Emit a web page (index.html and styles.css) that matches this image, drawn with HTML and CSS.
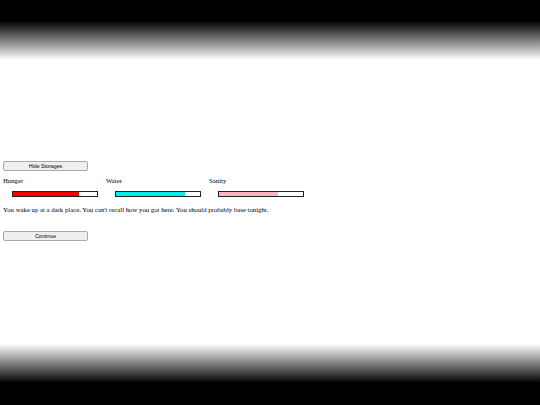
FILE: index.html
```html
<!DOCTYPE html>
<html>
<head>
<meta charset="utf-8">
<link rel="stylesheet" href="styles.css">
</head>
<body>
<main class="game">
  <button class="btn">Hide Storages</button>
  <div class="stats">
    <div class="stat">
      <div class="label">Hunger</div>
      <div class="bar"><div class="fill hunger" style="width:79%"></div></div>
    </div>
    <div class="stat">
      <div class="label">Water</div>
      <div class="bar"><div class="fill water" style="width:82%"></div></div>
    </div>
    <div class="stat">
      <div class="label">Sanity</div>
      <div class="bar"><div class="fill sanity" style="width:70%"></div></div>
    </div>
  </div>
  <p class="story">You wake up at a dark place. You can't recall how you got here. You should probably base tonight.</p>
  <button class="btn">Continue</button>
</main>
</body>
</html>
```
FILE: styles.css
```css
html, body {
  margin: 0;
  padding: 0;
}
html {
  height: 405px;
  background: linear-gradient(to bottom, #000 0px, #000 21px, #fff 60px, #fff 344px, #000 383px, #000 405px);
}
body {
  height: 405px;
  font-family: "Liberation Serif", "Times New Roman", serif;
  font-size: 6.75px;
  color: #000;
}
.game {
  padding: 161px 0 0 3px;
  display: flex;
  flex-direction: column;
  align-items: flex-start;
}
.btn {
  width: 85px;
  height: 10px;
  padding: 0;
  font-family: "Liberation Sans", Arial, sans-serif;
  font-size: 5.3px;
  color: #000;
  background: #efefef;
  border: 1px solid #a9a9a9;
  border-radius: 2px;
  line-height: 8px;
}
.stats {
  display: flex;
  margin-top: 6px;
}
.stat {
  width: 103px;
  display: flex;
  flex-direction: column;
}
.label {
  line-height: 8px;
  height: 8px;
}
.bar {
  margin: 6px 0 0 9px;
  width: 84px;
  height: 4px;
  border: 1px solid #222;
  background: #fff;
}
.fill {
  height: 100%;
}
.hunger { background: #f00; }
.water { background: #0ee; }
.sanity { background: #f7b6c2; }
.story {
  margin: 9px 0 17px;
  line-height: 8px;
}
```
